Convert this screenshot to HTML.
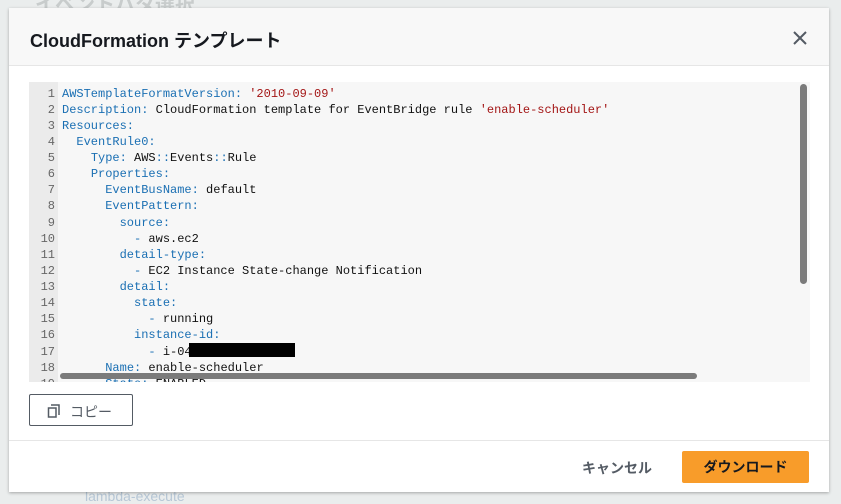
<!DOCTYPE html>
<html><head><meta charset="utf-8"><style>
*{margin:0;padding:0;box-sizing:border-box}
body{width:841px;height:503px;background:#eaeded;position:relative;overflow:hidden;font-family:"Liberation Sans","Noto Sans CJK JP",sans-serif}
.bgt{position:absolute;color:#c8cccc;font-size:20px;left:35px;top:-12px;font-weight:bold}
.bgb{position:absolute;top:488px;left:85px;color:#b7c7d6;font-size:14px}
.modal{position:absolute;left:9px;top:8px;width:820px;height:484px;background:#fff;box-shadow:0 1px 3px rgba(0,0,0,.3)}
.hdr{height:58px;background:#f8f8f8;border-bottom:1px solid #e6e6e6;position:relative}
.hdr h1{position:absolute;left:21px;top:19px;font-size:18px;font-weight:bold;color:#16191f}
.close{position:absolute;left:783px;top:22px}
.code{position:absolute;left:20px;top:74px;width:781px;height:300px;background:#f7f7f7;overflow:hidden}
.gut{position:absolute;left:0;top:0;width:29px;height:300px;background:#ebebeb}
pre{position:absolute;left:0;top:4px;font-family:"Liberation Mono",monospace;font-size:12px;line-height:16.06px;color:#111}
.n{display:inline-block;width:26px;text-align:right;color:#666;margin-right:7px}
.k{color:#1a6fb3}.s{color:#a31515}
.vs{position:absolute;left:771px;top:2px;width:7px;height:200px;border-radius:4px;background:#7b7b7b}
.hs{position:absolute;left:31px;top:291px;width:637px;height:6px;border-radius:3px;background:#7b7b7b}
.copy{position:absolute;left:20px;top:386px;width:104px;height:32px;border:1px solid #545b64;border-radius:2px;font-size:14px;color:#545b64}
.foot{position:absolute;left:0;top:432px;width:820px;border-top:1px solid #e6e6e6}
.cancel{position:absolute;left:573px;top:450px;font-size:14px;font-weight:bold;color:#545b64}
.dl{position:absolute;left:673px;top:443px;width:127px;height:32px;background:#f89c2a;border-radius:2px;font-size:14px;font-weight:bold;color:#16191f;text-align:center;line-height:32px}
</style></head><body>
<div class="bgt">イベントパタ選択</div>
<div class="bgb">lambda-execute</div>
<div class="modal">
<div class="hdr"><h1>CloudFormation テンプレート</h1>
<svg class="close" width="16" height="16" viewBox="0 0 16 16"><path d="M2 2L14 14M14 2L2 14" stroke="#545b64" stroke-width="2"/></svg></div>
<div class="code"><div class="gut"></div>
<pre><span class="n">1</span><span class="k">AWSTemplateFormatVersion:</span> <span class="s">'2010-09-09'</span>
<span class="n">2</span><span class="k">Description:</span> CloudFormation template for EventBridge rule <span class="s">'enable-scheduler'</span>
<span class="n">3</span><span class="k">Resources:</span>
<span class="n">4</span>  <span class="k">EventRule0:</span>
<span class="n">5</span>    <span class="k">Type:</span> AWS<span class="k">::</span>Events<span class="k">::</span>Rule
<span class="n">6</span>    <span class="k">Properties:</span>
<span class="n">7</span>      <span class="k">EventBusName:</span> default
<span class="n">8</span>      <span class="k">EventPattern:</span>
<span class="n">9</span>        <span class="k">source:</span>
<span class="n">10</span>          <span class="k">-</span> aws.ec2
<span class="n">11</span>        <span class="k">detail-type:</span>
<span class="n">12</span>          <span class="k">-</span> EC2 Instance State-change Notification
<span class="n">13</span>        <span class="k">detail:</span>
<span class="n">14</span>          <span class="k">state:</span>
<span class="n">15</span>            <span class="k">-</span> running
<span class="n">16</span>          <span class="k">instance-id:</span>
<span class="n">17</span>            <span class="k">-</span> i-04<span style="background:#000;display:inline-block;width:106px;height:14px;vertical-align:-2px;margin-left:-3px"></span>
<span class="n">18</span>      <span class="k">Name:</span> enable-scheduler
<span class="n">19</span>      <span class="k">State:</span> ENABLED</pre>
<div class="vs"></div><div class="hs"></div></div>
<div class="copy"><svg style="position:absolute;left:17px;top:9px" width="14" height="14" viewBox="0 0 14 14"><path d="M4 1h8v10" fill="none" stroke="#545b64" stroke-width="1.5"/><rect x="1.5" y="4" width="7.5" height="9" fill="none" stroke="#545b64" stroke-width="1.5"/></svg><span style="position:absolute;left:40px;top:7px">コピー</span></div>
<div class="foot"></div>
<div class="cancel">キャンセル</div>
<div class="dl">ダウンロード</div>
</div>
</body></html>
